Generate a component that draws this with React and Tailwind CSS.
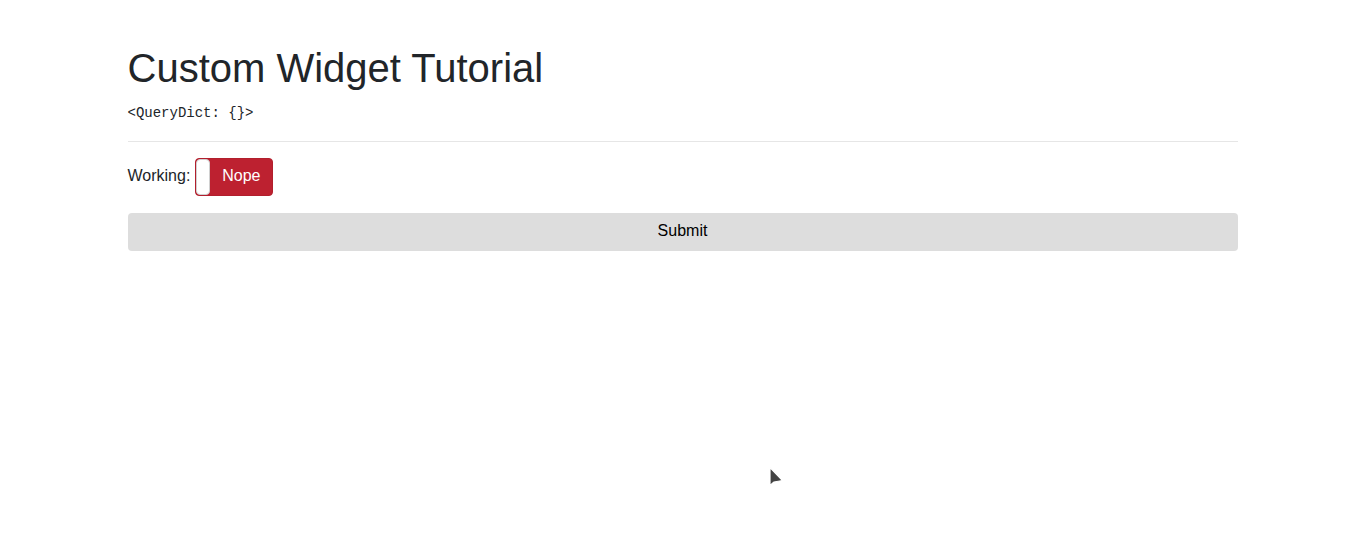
import React from 'react';

const Toggle = () => (
  <div className="relative flex h-[38px] w-[78px] overflow-hidden rounded-[4px] border border-[#b21f2d] bg-[#bd2130]">
    <span className="h-full w-[14px] rounded-[4px] border border-[#d0d0d0] bg-white" />
    <span className="flex flex-1 items-center justify-center pb-[2px] text-base text-white">Nope</span>
  </div>
);

export default function App() {
  return (
    <div className="relative min-h-[539px] bg-white font-['Liberation_Sans',Arial,sans-serif] text-[#212529]">
      <div className="mx-auto w-[1140px] px-[15px] pt-[44px]">
        <h1 className="mb-2 text-[40px] leading-[1.2] font-normal">Custom Widget Tutorial</h1>
        <pre className="pt-px font-['Liberation_Mono','Courier_New',monospace] text-[14px] leading-[24px] text-[#212529]">
          {'<QueryDict: {}>'}
        </pre>
        <hr className="my-4 border-t border-[#e6e6e6]" />
        <div className="mb-[17px] flex items-center gap-[5px] text-base">
          <span className="pb-[2px]">Working:</span>
          <Toggle />
        </div>
        <button className="h-[38px] w-full rounded-[4px] bg-[#dddddd] pb-[2px] text-base text-black">Submit</button>
      </div>
      <svg className="absolute left-[768px] top-[466px]" width="18" height="24" viewBox="0 0 18 24">
        <path d="M2 1.5 L2 19.5 L6 16 L14.5 14.5 Z" fill="#444" stroke="#fff" strokeWidth="1.2" strokeLinejoin="round" />
      </svg>
    </div>
  );
}
